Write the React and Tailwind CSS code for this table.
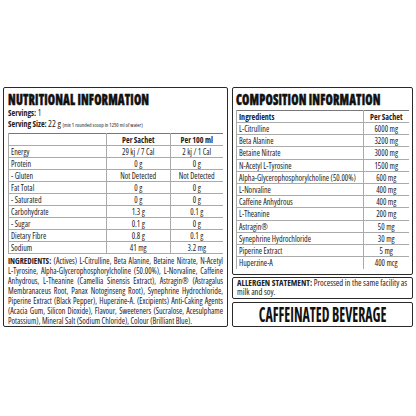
const body = { fontFamily: '"Open Sans", Roboto, sans-serif' };

const nutrition = [
  ["Energy", "29 kj / 7 Cal", "2 kj / 1 Cal"],
  ["Protein", "0 g", "0 g"],
  ["- Gluten", "Not Detected", "Not Detected"],
  ["Fat Total", "0 g", "0 g"],
  ["- Saturated", "0 g", "0 g"],
  ["Carbohydrate", "1.3 g", "0.1 g"],
  ["- Sugar", "0.1 g", "0 g"],
  ["Dietary Fibre", "0.8 g", "0.1 g"],
  ["Sodium", "41 mg", "3.2 mg"],
];

const composition = [
  ["L-Citrulline", "6000 mg"],
  ["Beta Alanine", "3200 mg"],
  ["Betaine Nitrate", "3000 mg"],
  ["N-Acetyl L-Tyrosine", "1500 mg"],
  ["Alpha-Glycerophosphorylcholine (50.00%)", "600 mg"],
  ["L-Norvaline", "400 mg"],
  ["Caffeine Anhydrous", "400 mg"],
  ["L-Theanine", "200 mg"],
  ["Astragin®", "50 mg"],
  ["Synephrine Hydrochloride", "30 mg"],
  ["Piperine Extract", "5 mg"],
  ["Huperzine-A", "400 mcg"],
];

function Title({ children }) {
  return (
    <h2 className="text-[15.5px] leading-[16px] font-extrabold text-[#111] whitespace-nowrap origin-left scale-x-[0.76] tracking-[0.2px] [-webkit-text-stroke:0.5px_#111]">
      {children}
    </h2>
  );
}

export default function App() {
  return (
    <div className="w-[416px] h-[416px] bg-white text-[#222] pt-[87px] px-[3px] flex gap-[4px] font-stretch-condensed" style={body}>
      {/* Nutritional panel */}
      <div className="w-[225px] h-[240px] border-[1.5px] border-[#2a2a2a] rounded-[2px] px-[4px] pt-[3px]">
        <Title>NUTRITIONAL INFORMATION</Title>
        <p className="text-[8px] leading-[11px]"><b>Servings:</b> 1</p>
        <p className="text-[8px] leading-[11px]">
          <b>Serving Size:</b> <span className="text-[9px]">22 g</span>{" "}
          <span className="text-[5.5px]">(mix 1 rounded scoop in 1250 ml of water)</span>
        </p>
        <table className="w-full mt-[2px] border-collapse text-[8px] leading-[11px]">
          <thead>
            <tr className="border-t border-[#777] h-[12px]">
              <th className="w-[98px] border-l border-[#aaa]"></th>
              <th className="border-l border-[#aaa] font-bold">Per Sachet</th>
              <th className="w-[53px] border-l border-[#aaa] font-bold">Per 100 ml</th>
            </tr>
          </thead>
          <tbody>
            {nutrition.map(([k, a, b]) => (
              <tr key={k} className="border-t border-[#aaa] h-[12px] last:border-b">
                <td className="pl-[2px] border-l border-[#aaa]">{k}</td>
                <td className="text-center border-l border-[#aaa]">{a}</td>
                <td className="text-center border-l border-[#aaa]">{b}</td>
              </tr>
            ))}
          </tbody>
        </table>
        <p className="text-[8px] leading-[10px] mt-[2px] text-justify">
          <b>INGREDIENTS:</b> (Actives) L-Citrulline, Beta Alanine, Betaine Nitrate, N-Acetyl L-Tyrosine,
          Alpha-Glycerophosphorylcholine (50.00%), L-Norvaline, Caffeine Anhydrous, L-Theanine (Camellia
          Sinensis Extract), Astragin® (Astragalus Membranaceus Root, Panax Notoginseng Root), Synephrine
          Hydrochloride, Piperine Extract (Black Pepper), Huperzine-A. (Excipients) Anti-Caking Agents (Acacia
          Gum, Silicon Dioxide), Flavour, Sweeteners (Sucralose, Acesulphame Potassium), Mineral Salt (Sodium
          Chloride), Colour (Brilliant Blue).
        </p>
      </div>

      {/* Right column */}
      <div className="w-[181px] h-[240px] flex flex-col">
        <div className="h-[188px] border-[1.5px] border-[#2a2a2a] rounded-[2px] px-[3px] pt-[3px]">
          <Title>COMPOSITION INFORMATION</Title>
          <table className="w-full mt-[3px] border-collapse text-[8px] leading-[11px]">
            <thead>
              <tr className="border-t border-[#777] h-[12px]">
                <th className="text-left pl-[2px] font-bold border-l border-[#aaa]">Ingredients</th>
                <th className="w-[46px] font-bold border-l border-[#aaa]">Per Sachet</th>
              </tr>
            </thead>
            <tbody>
              {composition.map(([k, v]) => (
                <tr key={k} className="border-t border-[#aaa] h-[12.2px]">
                  <td className="pl-[2px] border-l border-[#aaa] whitespace-nowrap">{k}</td>
                  <td className="text-center border-l border-[#aaa]">{v}</td>
                </tr>
              ))}
            </tbody>
          </table>
        </div>
        <div className="mt-[2px] h-[22px] border-[1.5px] border-[#2a2a2a] rounded-[2px] px-[4px] pt-[1px] text-[8.5px] leading-[8.5px]">
          <b>ALLERGEN STATEMENT:</b> Processed in the same facility as milk and soy.
        </div>
        <div className="mt-[3px] flex-1 border-[1.5px] border-[#2a2a2a] rounded-[2px] flex items-center justify-center overflow-hidden">
          <span className="text-[21px] leading-none font-bold text-[#111] whitespace-nowrap scale-x-[0.66]">
            CAFFEINATED BEVERAGE
          </span>
        </div>
      </div>
    </div>
  );
}
